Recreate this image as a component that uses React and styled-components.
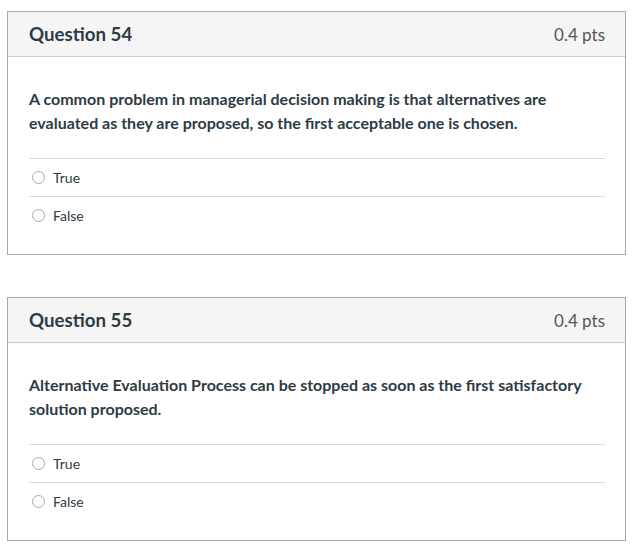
import React from 'react';
import styled, { createGlobalStyle } from 'styled-components';

const Global = createGlobalStyle`
	body {
		margin: 0;
		background: #fff;
		font-family: Lato, "Open Sans", sans-serif;
		color: #2d3b45;
	}
`;

const Page = styled.div`
	display: flex;
	flex-direction: column;
	gap: 42px;
	padding: 11px 0 0 7px;
	width: 619px;
`;

const Card = styled.section`
	border: 1px solid #a8a8a8;
	background: #fff;
`;

const Header = styled.header`
	display: flex;
	justify-content: space-between;
	align-items: center;
	height: 44px;
	padding: 0 20px 0 21px;
	background: #f5f5f5;
	border-bottom: 1px solid #c7cdd1;
`;

const Title = styled.h2`
	margin: 0;
	font-size: 18.7px;
	font-weight: 700;
	color: #2d3b45;
`;

const Points = styled.span`
	font-size: 17px;
	font-weight: 400;
	color: #555;
`;

const Body = styled.div`
	padding: 30px 20px 20px 21px;
`;

const Text = styled.p`
	margin: 0 0 23px;
	max-width: 565px;
	font-size: 16px;
	line-height: 24px;
	font-weight: 700;
	color: #2d3b45;
`;

const Answers = styled.div`
	border-top: 1px solid #dcdcdc;
`;

const Answer = styled.label`
	display: flex;
	align-items: center;
	gap: 8px;
	height: 37px;
	padding-left: 3px;
	font-size: 14px;
	color: #2d3b45;
	& + & {
		border-top: 1px solid #dcdcdc;
	}
`;

const Radio = styled.span`
	width: 11px;
	height: 11px;
	border: 1px solid #a9a9a9;
	border-radius: 50%;
	background: #fff;
`;

const questions = [
	{
		n: 54,
		text: 'A common problem in managerial decision making is that alternatives are evaluated as they are proposed, so the first acceptable one is chosen.',
	},
	{
		n: 55,
		text: 'Alternative Evaluation Process can be stopped as soon as the first satisfactory solution proposed.',
	},
];

export default function App() {
	return (
		<>
			<Global />
			<Page>
				{questions.map((q) => (
					<Card key={q.n}>
						<Header>
							<Title>Question {q.n}</Title>
							<Points>0.4 pts</Points>
						</Header>
						<Body>
							<Text>{q.text}</Text>
							<Answers>
								<Answer>
									<Radio />
									True
								</Answer>
								<Answer>
									<Radio />
									False
								</Answer>
							</Answers>
						</Body>
					</Card>
				))}
			</Page>
		</>
	);
}
